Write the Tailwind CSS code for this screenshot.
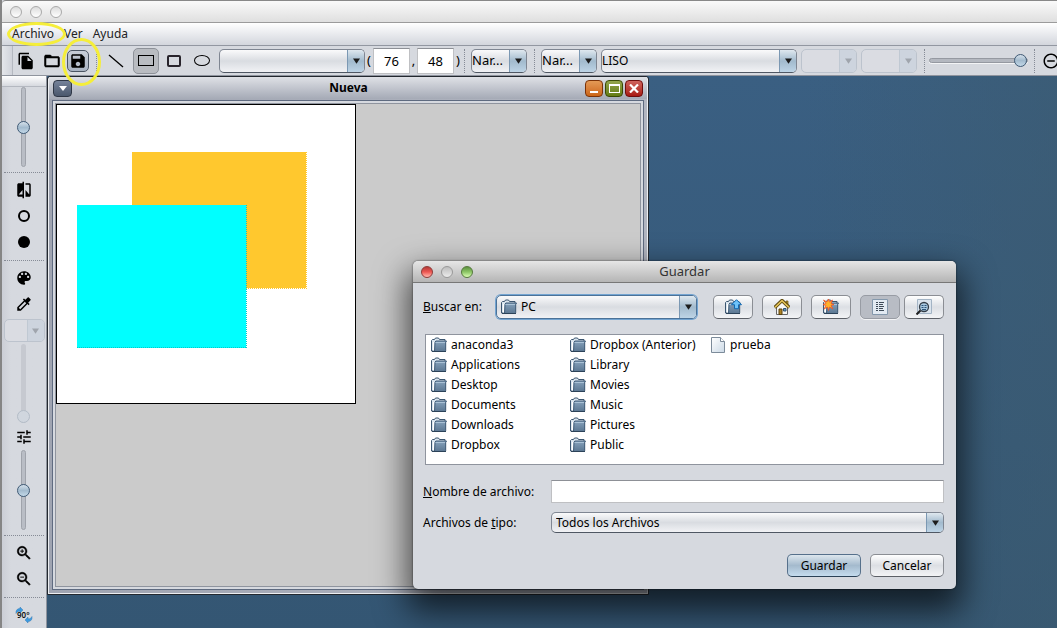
<!DOCTYPE html>
<html lang="es">
<head>
<meta charset="utf-8">
<title>Nueva</title>
<script src="https://cdn.jsdelivr.net/npm/@tailwindcss/browser@4"></script>
</head>
<body class="relative flex h-screen flex-col overflow-hidden border-l-2 border-[#858585] bg-[#d6d9df] font-['Noto_Sans',sans-serif] text-xs text-black">

<svg class="absolute size-0" aria-hidden="true">
  <defs>
    <linearGradient id="fold" x1="0" y1="0" x2="0" y2="1"><stop offset="0" stop-color="#86a2bc"/><stop offset="1" stop-color="#5a7691"/></linearGradient>
    <linearGradient id="page" x1="0" y1="0" x2="1" y2="1"><stop offset="0" stop-color="#fff"/><stop offset="1" stop-color="#cbd9e6"/></linearGradient>
    <symbol id="folder" viewBox="0 0 16 16">
      <path d="M.5 14V3.500l1-1h2l1-1.500h3l1 1.500h5.500V14Z" fill="#dbe6ef" stroke="#3c5670"/>
      <path d="M2.500 13.500V5" stroke="#fff"/>
      <path d="M3.500 14.500l.5-9 .8-1.500H15.500l-.8 1.500V13.500l-1 1Z" fill="url(#fold)" stroke="#3f5b76"/>
      <path d="M4.500 5.500h9.500" stroke="#aac2d6"/>
      <path d="M1 14.500h14" stroke="#2c4359"/>
    </symbol>
    <symbol id="file" viewBox="0 0 14 16">
      <path d="M.5.500h9l4 4v11H.5Z" fill="url(#page)" stroke="#7c8b9a"/>
      <path d="M9.500.500v4h4" fill="#fff" stroke="#7c8b9a"/>
    </symbol>
    <symbol id="lens" viewBox="0 0 24 24">
      <path d="M15.500 14h-.79l-.28-.27C15.410 12.590 16 11.110 16 9.500 16 5.910 13.090 3 9.500 3S3 5.910 3 9.500 5.910 16 9.500 16c1.610 0 3.090-.59 4.230-1.570l.27.28v.79l5 4.990L20.490 19l-4.990-5zm-6 0C7.010 14 5 11.990 5 9.500S7.010 5 9.500 5 14 7.010 14 9.500 11.990 14 9.500 14z" stroke="#000" stroke-width=".6"/>
    </symbol>
  </defs>
</svg>

<!-- Title bar -->
<header class="flex h-[23px] shrink-0 items-center gap-2 rounded-tl border-t border-b border-t-[#888] border-b-[#9b9b9b] bg-linear-to-b from-[#fafafa] to-[#dfdfdf] pl-2">
  <button aria-label="Cerrar" class="size-3 rounded-full border border-[#a9a9a9] bg-linear-to-b from-[#dcdcdc] to-white"></button>
  <button aria-label="Minimizar" class="size-3 rounded-full border border-[#a9a9a9] bg-linear-to-b from-[#dcdcdc] to-white"></button>
  <button aria-label="Ampliar" class="size-3 rounded-full border border-[#a9a9a9] bg-linear-to-b from-[#dcdcdc] to-white"></button>
</header>

<!-- Menu bar -->
<nav class="flex h-[23px] shrink-0 items-center gap-[10px] border-b border-[#9297a1] bg-linear-to-b from-white to-[#d3d6dd] pl-[10px] text-xs text-[#222]">
  <button>Archivo</button><button>Ver</button><button>Ayuda</button>
</nav>

<!-- Tool bar -->
<div role="toolbar" aria-label="Herramientas" class="flex h-[30px] shrink-0 items-center overflow-hidden border-b border-[#8f949e] *:shrink-0">
  <span class="h-full w-[11px] border-r border-[#b4b8c0] bg-linear-to-r from-[#e4e6ea] to-[#d0d3da]"></span>
  <button aria-label="Nuevo" class="flex h-6 w-[26px] items-center justify-center"><svg class="size-[18px]" viewBox="0 0 24 24"><path d="M16 1H4c-1.100 0-2 .9-2 2v14h2V3h12V1zm-1 4l6 6v10c0 1.100-.9 2-2 2H7.990C6.890 23 6 22.100 6 21l.01-14c0-1.100.89-2 1.990-2h7zm-1 7h5.500L14 6.500V12z"/></svg></button>
  <button aria-label="Abrir" class="flex h-6 w-[26px] items-center justify-center"><svg class="size-[18px]" viewBox="0 0 24 24"><path d="M20 6h-8l-2-2H4c-1.100 0-1.990.9-1.990 2L2 18c0 1.100.9 2 2 2h16c1.100 0 2-.9 2-2V8c0-1.100-.9-2-2-2zm0 12H4V8h16v10z" stroke="#000" stroke-width=".7"/></svg></button>
  <button aria-label="Guardar" class="ml-0.5 flex size-[22px] items-center justify-center rounded-[5px] border border-[#4b5563] bg-linear-to-b from-[#c8ced8] to-[#a9b3c2]"><svg class="size-[18px] shrink-0" viewBox="0 0 24 24"><path d="M17 3H5c-1.110 0-2 .9-2 2v14c0 1.100.89 2 2 2h14c1.100 0 2-.9 2-2V7l-4-4zm-5 16c-1.660 0-3-1.340-3-3s1.340-3 3-3 3 1.340 3 3-1.340 3-3 3zm3-10H5V5h10v4z"/></svg></button>
  <span class="ml-[7px] h-6 border-l border-dotted border-[#868b96]"></span>
  <button aria-label="Línea" class="ml-1.5 flex h-6 w-[26px] items-center justify-center"><svg class="size-4" viewBox="0 0 16 16"><path d="M1 2l14 12" stroke="#000" stroke-width="1.300"/></svg></button>
  <button aria-label="Rectángulo" class="ml-1 flex h-[26px] w-[26px] items-center justify-center rounded-[5px] border border-[#8e9299] bg-[#b9bcc1]"><span class="h-[11px] w-4 border border-black"></span></button>
  <button aria-label="Rectángulo redondeado" class="ml-0.5 flex h-6 w-[26px] items-center justify-center"><span class="h-3 w-[14px] rounded-[2px] border-2 border-[#28242c]"></span></button>
  <button aria-label="Elipse" class="ml-0.5 flex h-6 w-[26px] items-center justify-center"><span class="h-[11px] w-4 rounded-[50%] border border-black"></span></button>

  <label class="ml-1 flex h-6 w-[146px] overflow-hidden rounded-[5px] border border-[#7f8692] border-b-[#4f5763] bg-linear-to-b from-[#fafafb] via-[#d9dce1] to-[#f1f2f5]">
    <select aria-label="Figura" class="min-w-0 flex-1 appearance-none outline-none"><option></option></select>
    <span class="flex w-[17px] items-center justify-center border-l border-[#7b98b3] bg-linear-to-b from-[#dfe8ef] via-[#a2bacd] to-[#bdd4e6]"><svg class="h-[6px] w-[7px]" viewBox="0 0 8 6"><path d="M0 0h8L4 6Z" fill="#1c1c1c"/></svg></span>
  </label>
  <span class="w-2 text-center text-[13px]">(</span>
  <input aria-label="X" value="76" class="h-[26px] w-[37px] border border-[#bfc0c3] border-t-[#8d9096] bg-white text-center text-[13px]">
  <span class="w-[7px] text-center text-[13px]">,</span>
  <input aria-label="Y" value="48" class="h-[26px] w-[37px] border border-[#bfc0c3] border-t-[#8d9096] bg-white text-center text-[13px]">
  <span class="w-2 text-center text-[13px]">)</span>
  <span class="ml-0.5 h-6 border-l border-dotted border-[#868b96]"></span>
  <label class="ml-1.5 flex h-6 w-14 overflow-hidden rounded-[5px] border border-[#7f8692] border-b-[#4f5763] bg-linear-to-b from-[#fafafb] via-[#d9dce1] to-[#f1f2f5]">
    <select aria-label="Color de trazo" class="min-w-0 flex-1 appearance-none text-[13px] outline-none"><option>Nar...</option></select>
    <span class="flex w-[17px] items-center justify-center border-l border-[#7b98b3] bg-linear-to-b from-[#dfe8ef] via-[#a2bacd] to-[#bdd4e6]"><svg class="h-[6px] w-[7px]" viewBox="0 0 8 6"><path d="M0 0h8L4 6Z" fill="#1c1c1c"/></svg></span>
  </label>
  <span class="ml-[7px] h-6 border-l border-dotted border-[#868b96]"></span>
  <label class="ml-1.5 flex h-6 w-14 overflow-hidden rounded-[5px] border border-[#7f8692] border-b-[#4f5763] bg-linear-to-b from-[#fafafb] via-[#d9dce1] to-[#f1f2f5]">
    <select aria-label="Color de relleno" class="min-w-0 flex-1 appearance-none text-[13px] outline-none"><option>Nar...</option></select>
    <span class="flex w-[17px] items-center justify-center border-l border-[#7b98b3] bg-linear-to-b from-[#dfe8ef] via-[#a2bacd] to-[#bdd4e6]"><svg class="h-[6px] w-[7px]" viewBox="0 0 8 6"><path d="M0 0h8L4 6Z" fill="#1c1c1c"/></svg></span>
  </label>
  <label class="ml-1 flex h-6 w-[196px] overflow-hidden rounded-[5px] border border-[#7f8692] border-b-[#4f5763] bg-linear-to-b from-[#fafafb] via-[#d9dce1] to-[#f1f2f5]">
    <select aria-label="Tipo de relleno" class="min-w-0 flex-1 appearance-none outline-none"><option>LISO</option></select>
    <span class="flex w-[17px] items-center justify-center border-l border-[#7b98b3] bg-linear-to-b from-[#dfe8ef] via-[#a2bacd] to-[#bdd4e6]"><svg class="h-[6px] w-[7px]" viewBox="0 0 8 6"><path d="M0 0h8L4 6Z" fill="#1c1c1c"/></svg></span>
  </label>
  <label class="ml-1 flex h-6 w-14 overflow-hidden rounded-[5px] border border-[#bcc3cd] bg-[#dadce2]">
    <select disabled aria-label="Color 1" class="min-w-0 flex-1 appearance-none"><option></option></select>
    <span class="flex w-[17px] items-center justify-center border-l border-[#c0c9d3] bg-[#cdd4de]"><svg class="h-[6px] w-[7px]" viewBox="0 0 8 6"><path d="M0 0h8L4 6Z" fill="#a0a5ad"/></svg></span>
  </label>
  <label class="ml-1 flex h-6 w-14 overflow-hidden rounded-[5px] border border-[#bcc3cd] bg-[#dadce2]">
    <select disabled aria-label="Color 2" class="min-w-0 flex-1 appearance-none"><option></option></select>
    <span class="flex w-[17px] items-center justify-center border-l border-[#c0c9d3] bg-[#cdd4de]"><svg class="h-[6px] w-[7px]" viewBox="0 0 8 6"><path d="M0 0h8L4 6Z" fill="#a0a5ad"/></svg></span>
  </label>
  <span class="ml-[7px] h-6 border-l border-dotted border-[#868b96]"></span>
  <input type="range" value="100" aria-label="Transparencia" class="ml-1 h-[18px] w-[99px] appearance-none bg-transparent [&::-webkit-slider-runnable-track]:h-[5px] [&::-webkit-slider-runnable-track]:rounded-full [&::-webkit-slider-runnable-track]:border [&::-webkit-slider-runnable-track]:border-[#9599a1] [&::-webkit-slider-runnable-track]:bg-[#b4b8c0] [&::-webkit-slider-runnable-track]:shadow-[0_1px_0_#f3f4f6] [&::-webkit-slider-thumb]:-mt-[5px] [&::-webkit-slider-thumb]:size-[13px] [&::-webkit-slider-thumb]:appearance-none [&::-webkit-slider-thumb]:rounded-full [&::-webkit-slider-thumb]:border [&::-webkit-slider-thumb]:border-[#3f5a75] [&::-webkit-slider-thumb]:bg-linear-to-b [&::-webkit-slider-thumb]:from-[#d5e0ea] [&::-webkit-slider-thumb]:via-[#a3bbce] [&::-webkit-slider-thumb]:to-[#c3d8e8]">
  <span class="ml-1.5 h-6 border-l border-dotted border-[#868b96]"></span>
  <button aria-label="Alejar" class="ml-[7px] flex h-6 w-[18px] items-center"><svg class="size-[18px]" viewBox="0 0 24 24"><path d="M7 11v2h10v-2H7zm5-9C6.480 2 2 6.480 2 12s4.480 10 10 10 10-4.480 10-10S17.520 2 12 2zm0 18c-4.410 0-8-3.590-8-8s3.590-8 8-8 8 3.590 8 8-3.590 8-8 8z"/></svg></button>
</div>

<div class="flex min-h-0 flex-1">
  <!-- Side tools -->
  <aside class="flex w-[45px] shrink-0 flex-col items-center overflow-hidden border-r border-[#8f949e] bg-linear-to-r from-[#cbced6] to-[#d6d9df] to-20% *:shrink-0">
    <span class="h-[11px] w-full border-b border-[#b4b8c0] bg-linear-to-b from-white to-[#d6d9df]"></span>
    <input type="range" value="50" aria-label="Brillo" class="mr-px h-20 w-[15px] appearance-none bg-transparent [writing-mode:vertical-lr] [&::-webkit-slider-runnable-track]:w-[5px] [&::-webkit-slider-runnable-track]:rounded-full [&::-webkit-slider-runnable-track]:border [&::-webkit-slider-runnable-track]:border-[#9fa3ab] [&::-webkit-slider-runnable-track]:bg-[#b9bdc5] [&::-webkit-slider-thumb]:-ml-[5px] [&::-webkit-slider-thumb]:size-[13px] [&::-webkit-slider-thumb]:appearance-none [&::-webkit-slider-thumb]:rounded-full [&::-webkit-slider-thumb]:border [&::-webkit-slider-thumb]:border-[#3f5a75] [&::-webkit-slider-thumb]:bg-linear-to-b [&::-webkit-slider-thumb]:from-[#d5e0ea] [&::-webkit-slider-thumb]:via-[#a3bbce] [&::-webkit-slider-thumb]:to-[#c3d8e8]">
    <span class="mt-[5px] mb-1 h-px w-10 border-t border-dotted border-[#868b96]"></span>
    <button aria-label="Contraste" class="flex size-[26px] items-center justify-center"><svg class="size-[18px]" viewBox="0 0 24 24"><path d="M10 3H5c-1.100 0-2 .9-2 2v14c0 1.100.9 2 2 2h5v2h2V1h-2v2zm0 15H5l5-6v6zm9-15h-5v2h5v13l-5-6v9h5c1.100 0 2-.9 2-2V5c0-1.100-.9-2-2-2z"/></svg></button>
    <button aria-label="Sin relleno" class="flex size-[26px] items-center justify-center"><span class="size-3 rounded-full border-2 border-black"></span></button>
    <button aria-label="Relleno" class="flex size-[26px] items-center justify-center"><span class="size-3 rounded-full bg-black"></span></button>
    <span class="mt-[5px] mb-1 h-px w-10 border-t border-dotted border-[#868b96]"></span>
    <button aria-label="Paleta" class="flex size-[26px] items-center justify-center"><svg class="size-[18px]" viewBox="0 0 24 24"><path d="M12 3c-4.970 0-9 4.030-9 9s4.030 9 9 9c.83 0 1.500-.67 1.500-1.500 0-.39-.15-.74-.39-1.010-.23-.26-.38-.61-.38-.99 0-.83.67-1.500 1.500-1.500H16c2.760 0 5-2.240 5-5 0-4.420-4.030-8-9-8zm-5.500 9c-.83 0-1.500-.67-1.500-1.500S5.670 9 6.500 9 8 9.670 8 10.500 7.330 12 6.500 12zm3-4C8.670 8 8 7.330 8 6.500S8.670 5 9.500 5s1.500.67 1.500 1.500S10.330 8 9.500 8zm5 0c-.83 0-1.500-.67-1.500-1.500S13.670 5 14.500 5s1.500.67 1.500 1.500S15.330 8 14.500 8zm3 4c-.83 0-1.500-.67-1.500-1.500S16.670 9 17.500 9s1.500.67 1.500 1.500-.67 1.500-1.500 1.500z"/></svg></button>
    <button aria-label="Cuentagotas" class="flex size-[26px] items-center justify-center"><svg class="size-[18px]" viewBox="0 0 24 24"><path d="M20.710 5.630l-2.340-2.340c-.39-.39-1.020-.39-1.410 0l-3.120 3.120-1.930-1.910-1.410 1.410 1.420 1.420L3 16.250V21h4.750l8.920-8.920 1.420 1.420 1.410-1.410-1.920-1.920 3.120-3.120c.4-.4.4-1.030.01-1.420zM6.920 19L5 17.080l8.060-8.060 1.920 1.920L6.920 19z"/></svg></button>
    <label class="mt-0.5 mb-0.5 flex h-[23px] w-[41px] overflow-hidden rounded-[5px] border border-[#bcc3cd] bg-[#dadce2]">
      <select disabled aria-label="Espacio de color" class="min-w-0 flex-1 appearance-none"><option></option></select>
      <span class="flex w-[17px] items-center justify-center border-l border-[#c0c9d3] bg-[#cdd4de]"><svg class="h-[6px] w-[7px]" viewBox="0 0 8 6"><path d="M0 0h8L4 6Z" fill="#a0a5ad"/></svg></span>
    </label>
    <input type="range" value="100" disabled aria-label="Umbral" class="mr-px mb-px h-[79px] w-[15px] appearance-none bg-transparent [writing-mode:vertical-lr] [&::-webkit-slider-runnable-track]:w-[5px] [&::-webkit-slider-runnable-track]:rounded-full [&::-webkit-slider-runnable-track]:bg-[#c6c9d0] [&::-webkit-slider-thumb]:-ml-1 [&::-webkit-slider-thumb]:size-[13px] [&::-webkit-slider-thumb]:appearance-none [&::-webkit-slider-thumb]:rounded-full [&::-webkit-slider-thumb]:border [&::-webkit-slider-thumb]:border-[#b3bcc7] [&::-webkit-slider-thumb]:bg-[#d0d6de]">
    <button aria-label="Ajustes" class="flex size-[26px] items-center justify-center"><svg class="size-[18px]" viewBox="0 0 24 24"><path d="M3 17v2h6v-2H3zM3 5v2h10V5H3zm10 16v-2h8v-2h-8v-2h-2v6h2zM7 9v2H3v2h4v2h2V9H7zm14 4v-2H11v2h10zm-6-4h2V7h4V5h-4V3h-2v6z"/></svg></button>
    <input type="range" value="50" aria-label="Niveles" class="mr-px h-20 w-[15px] appearance-none bg-transparent [writing-mode:vertical-lr] [&::-webkit-slider-runnable-track]:w-[5px] [&::-webkit-slider-runnable-track]:rounded-full [&::-webkit-slider-runnable-track]:border [&::-webkit-slider-runnable-track]:border-[#9fa3ab] [&::-webkit-slider-runnable-track]:bg-[#b9bdc5] [&::-webkit-slider-thumb]:-ml-[5px] [&::-webkit-slider-thumb]:size-[13px] [&::-webkit-slider-thumb]:appearance-none [&::-webkit-slider-thumb]:rounded-full [&::-webkit-slider-thumb]:border [&::-webkit-slider-thumb]:border-[#3f5a75] [&::-webkit-slider-thumb]:bg-linear-to-b [&::-webkit-slider-thumb]:from-[#d5e0ea] [&::-webkit-slider-thumb]:via-[#a3bbce] [&::-webkit-slider-thumb]:to-[#c3d8e8]">
    <span class="mt-[5px] mb-1 h-px w-10 border-t border-dotted border-[#868b96]"></span>
    <button aria-label="Aumentar" class="flex size-[26px] items-center justify-center"><svg class="size-[18px]" viewBox="0 0 24 24"><use href="#lens"/><path d="M7 9.500h5M9.500 7v5" stroke="#000" stroke-width="1.300"/></svg></button>
    <button aria-label="Reducir" class="flex size-[26px] items-center justify-center"><svg class="size-[18px]" viewBox="0 0 24 24"><use href="#lens"/><path d="M7 9.500h5" stroke="#000" stroke-width="1.300"/></svg></button>
    <span class="mt-[5px] mb-1 h-px w-10 border-t border-dotted border-[#868b96]"></span>
    <button aria-label="Girar 90°" class="flex size-[26px] items-center justify-center"><svg class="h-4 w-[18px]" viewBox="0 0 18 16"><path d="M1 6.500C.5 3 2.500 1.500 5 1.500V0L8 3 5 6V4.200C3 4 2 5 1 6.500ZM17 9.500c.5 3.500-1.500 5-4 5V16l-3-3 3-3v1.800c2 .2 3-.8 4-2.300Z" fill="#3b9be0" stroke="#2a6da8" stroke-width=".4"/><text x="2" y="11" font-size="8" font-weight="600" font-family="Noto Sans" fill="#111">90°</text></svg></button>
  </aside>

  <!-- Desktop -->
  <main class="relative min-w-0 flex-1 overflow-hidden bg-linear-to-b from-[#3a5f82] to-[#345673]">
    <span class="absolute inset-0 bg-linear-to-r from-transparent from-75% to-[#3c5b70]/60 to-100%"></span>
    <section aria-label="Nueva" class="absolute top-0 left-0 flex h-[519px] w-[602px] flex-col rounded-t-[3px] border border-[#23282f] bg-linear-to-r from-[#9fa4b1] to-[#b2b6c1] px-1 pb-1 shadow-[inset_1px_1px_0_#eceef1,inset_-1px_-1px_0_#eceef1]">
      <div class="-mx-[3px] mb-px flex h-[22px] items-center bg-linear-to-b from-[#dfe1e6] to-[#a5aab6] px-0.5">
        <button aria-label="Menú de ventana" class="ml-0.5 flex h-[17px] w-[19px] items-center justify-center rounded-[4px] border border-[#2f3746] bg-linear-to-b from-[#76839a] to-[#4b586d]"><svg class="h-[5px] w-2" viewBox="0 0 8 5"><path d="M0 0h8L4 5Z" fill="#fff"/></svg></button>
        <h1 class="flex-1 pl-10 text-center text-xs leading-5 font-bold">Nueva</h1>
        <div class="flex gap-0.5 pr-0.5">
          <button aria-label="Minimizar ventana" class="flex h-[17px] w-[18px] items-end justify-center rounded-[4px] border border-[#7c3207] bg-linear-to-b from-[#e49a56] to-[#cc6512] pb-[3px]"><span class="h-0.5 w-2 bg-white"></span></button>
          <button aria-label="Maximizar ventana" class="flex h-[17px] w-[18px] items-center justify-center rounded-[4px] border border-[#3a4a06] bg-linear-to-b from-[#94a64c] to-[#647c10]"><span class="h-[9px] w-[11px] border border-t-2 border-white"></span></button>
          <button aria-label="Cerrar ventana" class="flex h-[17px] w-[18px] items-center justify-center rounded-[4px] border border-[#6e0d0d] bg-linear-to-b from-[#cf625c] to-[#a91610]"><svg class="h-[9px] w-[10px]" viewBox="0 0 10 9"><path d="M1 .5l8 8M9 .5l-8 8" stroke="#fff" stroke-width="2.200"/></svg></button>
        </div>
      </div>
      <div class="flex min-h-0 flex-1 border border-[#5f6b80] bg-[#d6d9df] p-0.5">
        <div class="flex-1 border border-[#8f949e] bg-[#cbcbcb]">
          <svg class="block h-[300px] w-[300px]" viewBox="0 0 300 300" role="img" aria-label="Lienzo">
            <rect x=".5" y=".5" width="299" height="299" fill="#fff" stroke="#000"/>
            <rect x="76" y="48" width="174" height="136" fill="#ffc82e"/>
            <path d="M76 184.500h175M250.500 48v137" stroke="#ffc82e" stroke-dasharray="1 1"/>
            <rect x="21" y="101" width="169" height="143" fill="#0ff"/>
            <path d="M21 243.500h170M190.500 101v143" stroke="#0cc" stroke-dasharray="1 1"/>
          </svg>
        </div>
      </div>
    </section>
  </main>
</div>

<!-- Save dialog -->
<form role="dialog" aria-label="Guardar" class="absolute top-[261px] left-[411px] flex w-[543px] flex-col rounded-[5px] bg-[#d6d9df] text-[13px] shadow-[0_16px_32px_6px_rgba(0,0,0,.65),0_0_2px_rgba(0,0,0,.7)]">
  <div class="flex h-[22px] items-center rounded-t-[5px] border-b border-[#777] bg-linear-to-b from-[#e6e6e6] to-[#b5b5b5] px-2">
    <div class="flex gap-2">
      <button type="button" aria-label="Cerrar" class="size-3 rounded-full border border-[#8e3a37] bg-linear-to-b from-[#b53b38] via-[#ee5753] to-[#ffb9b2]"></button>
      <button type="button" aria-label="Minimizar" class="size-3 rounded-full border border-[#999] bg-linear-to-b from-[#bdbdbd] to-[#ececec]"></button>
      <button type="button" aria-label="Ampliar" class="size-3 rounded-full border border-[#55793d] bg-linear-to-b from-[#5e9240] via-[#8dc666] to-[#dcffb5]"></button>
    </div>
    <h2 class="flex-1 pr-13 text-center text-[13px] text-[#333]">Guardar</h2>
  </div>
  <div class="flex flex-col px-[10px] pt-3 pr-3 pb-3">
    <div class="flex h-6 items-center">
      <label for="dir" class="w-[73px] shrink-0 text-xs"><u>B</u>uscar en:</label>
      <div class="flex h-6 min-w-0 flex-1 overflow-hidden rounded-[5px] border border-[#4c7298] bg-linear-to-b from-[#fafafb] via-[#d9dce1] to-[#f1f2f5] ring-1 ring-[#73a4d1]">
        <svg class="mt-[3px] ml-1 h-4 w-4 shrink-0"><use href="#folder"/></svg>
        <select id="dir" class="min-w-0 flex-1 appearance-none pl-1 text-xs outline-none"><option>PC</option></select>
        <span class="flex w-[17px] items-center justify-center border-l border-[#7b98b3] bg-linear-to-b from-[#dfe8ef] via-[#a2bacd] to-[#bdd4e6]"><svg class="h-[6px] w-[7px]" viewBox="0 0 8 6"><path d="M0 0h8L4 6Z" fill="#1c1c1c"/></svg></span>
      </div>
      <div class="ml-4 flex shrink-0 gap-[9px]">
        <button type="button" aria-label="Subir un nivel" class="flex h-6 w-10 items-center justify-center rounded-[5px] border border-[#8b8e94] border-b-[#5c6067] bg-linear-to-b from-white via-[#dcdfe4] to-[#f3f4f6]"><svg class="h-4 w-[17px]" viewBox="0 0 17 16"><use href="#folder" width="16" height="16"/><path d="M11.500.700l5 5h-3v4h-4v-4h-3Z" fill="#6ec3fa" stroke="#1268b0"/></svg></button>
        <button type="button" aria-label="Inicio" class="flex h-6 w-10 items-center justify-center rounded-[5px] border border-[#8b8e94] border-b-[#5c6067] bg-linear-to-b from-white via-[#dcdfe4] to-[#f3f4f6]"><svg class="size-4" viewBox="0 0 16 16"><path d="M2.500 8v7.500h11V8L8 2.500Z" fill="#f7f7f3" stroke="#666"/><path d="M12 2h2v5l-2-2Z" fill="#b89832" stroke="#67510f" stroke-width=".7"/><path d="M.7 8.500L8 1.500l7.300 7" fill="none" stroke="#57430c" stroke-width="3.400"/><path d="M1 8.300L8 1.700l7 6.600" fill="none" stroke="#e0c056" stroke-width="1.600"/><path d="M5 10h3v5.500H5Z" fill="#ad8120" stroke="#5b430f"/><path d="M9.500 9.500h2.500V12H9.500Z" fill="#5f9dca" stroke="#345370"/></svg></button>
        <button type="button" aria-label="Nueva carpeta" class="flex h-6 w-10 items-center justify-center rounded-[5px] border border-[#8b8e94] border-b-[#5c6067] bg-linear-to-b from-white via-[#dcdfe4] to-[#f3f4f6]"><svg class="size-4" viewBox="0 0 16 16"><use href="#folder"/><path d="M5.500 0l1 3 3-2-1.500 3.500 3 1-3 1 2 3.500-3.500-2-1 3.500-1-3.500-3.500 2 2-3.500-3-1 3-1L.5 1l3.500 2Z" fill="#ffb229" stroke="#f0512c" stroke-width=".8"/></svg></button>
        <div class="flex gap-1">
          <button type="button" aria-label="Lista" aria-pressed="true" class="flex h-6 w-10 items-center justify-center rounded-[5px] border border-[#989ca4] bg-[#b8bcc4] shadow-[0_1px_0_#f3f4f6]"><svg class="size-4" viewBox="0 0 16 16"><path d="M.5.500h15v15H.5Z" fill="#e2eaf2" stroke="#8498ac"/><path d="M4 3.500h2M7 3.500h5M4 5.500h2M7 5.500h4M4 7.500h2M7 7.500h5M4 9.500h2M7 9.500h4M4 11.500h2M7 11.500h5" stroke="#3f4c59"/></svg></button>
          <button type="button" aria-label="Detalles" class="flex h-6 w-10 items-center justify-center rounded-[5px] border border-[#8b8e94] border-b-[#5c6067] bg-linear-to-b from-white via-[#dcdfe4] to-[#f3f4f6]"><svg class="size-4" viewBox="0 0 16 16"><path d="M1.500.500h14v14h-14Z" fill="#dbe4ed" stroke="#a3b4c5"/><path d="M4.500 11.500L.5 15.500" stroke="#222" stroke-width="2"/><circle cx="8" cy="8" r="4.500" fill="#a8c8e0" stroke="#333d48" stroke-width="1.300"/><path d="M5.500 6.500h2M8.500 6.500h2M5.500 8.500h2M8.500 8.500h2M6 10.500h4" stroke="#2d557a"/></svg></button>
        </div>
      </div>
    </div>

    <ul class="mt-[15px] ml-0.5 grid h-[131px] grid-flow-col grid-cols-[139px_140px_auto] grid-rows-[repeat(6,20px)] border border-[#8f949e] bg-white pl-[5px] text-xs *:flex *:items-center *:gap-1 [&_svg]:h-4 [&_svg]:w-4">
      <li><svg><use href="#folder"/></svg>anaconda3</li>
      <li><svg><use href="#folder"/></svg>Applications</li>
      <li><svg><use href="#folder"/></svg>Desktop</li>
      <li><svg><use href="#folder"/></svg>Documents</li>
      <li><svg><use href="#folder"/></svg>Downloads</li>
      <li><svg><use href="#folder"/></svg>Dropbox</li>
      <li><svg><use href="#folder"/></svg>Dropbox (Anterior)</li>
      <li><svg><use href="#folder"/></svg>Library</li>
      <li><svg><use href="#folder"/></svg>Movies</li>
      <li><svg><use href="#folder"/></svg>Music</li>
      <li><svg><use href="#folder"/></svg>Pictures</li>
      <li><svg><use href="#folder"/></svg>Public</li>
      <li><svg><use href="#file"/></svg>prueba</li>
    </ul>

    <div class="mt-[15px] flex h-[23px] items-center">
      <label for="name" class="w-32 shrink-0 text-xs"><u>N</u>ombre de archivo:</label>
      <input id="name" type="text" class="h-[23px] min-w-0 flex-1 border border-[#bfc0c3] border-t-[#8d9096] bg-white px-1">
    </div>
    <div class="mt-[9px] flex h-[21px] items-center">
      <label for="type" class="w-32 shrink-0 text-xs">Archivos de <u>t</u>ipo:</label>
      <div class="flex h-[21px] min-w-0 flex-1 overflow-hidden rounded-[5px] border border-[#7f8692] border-b-[#4f5763] bg-linear-to-b from-[#fafafb] via-[#d9dce1] to-[#f1f2f5]">
        <select id="type" class="min-w-0 flex-1 appearance-none pl-1 text-xs outline-none"><option>Todos los Archivos</option></select>
        <span class="flex w-[17px] items-center justify-center border-l border-[#7b98b3] bg-linear-to-b from-[#dfe8ef] via-[#a2bacd] to-[#bdd4e6]"><svg class="h-[6px] w-[7px]" viewBox="0 0 8 6"><path d="M0 0h8L4 6Z" fill="#1c1c1c"/></svg></span>
      </div>
    </div>
    <div class="mt-[21px] flex justify-end gap-[9px] text-xs">
      <button type="submit" class="h-[23px] w-[74px] rounded-[5px] border border-[#56708b] border-b-[#2b4156] bg-linear-to-b from-[#dde6ed] via-[#a4bacd] to-[#c5dcee]">Guardar</button>
      <button type="button" class="h-[23px] w-[74px] rounded-[5px] border border-[#8b8e94] border-b-[#5c6067] bg-linear-to-b from-white via-[#dcdfe4] to-[#f3f4f6]">Cancelar</button>
    </div>
  </div>
</form>

<!-- Highlight marks -->
<span class="pointer-events-none absolute top-[22px] left-[5px] h-6 w-[59px] rounded-[50%] border-3 border-[#f5ee3a]"></span>
<span class="pointer-events-none absolute top-[38px] left-[60px] h-12 w-[39px] rounded-[50%] border-3 border-[#f5ee3a]"></span>
</body>
</html>
